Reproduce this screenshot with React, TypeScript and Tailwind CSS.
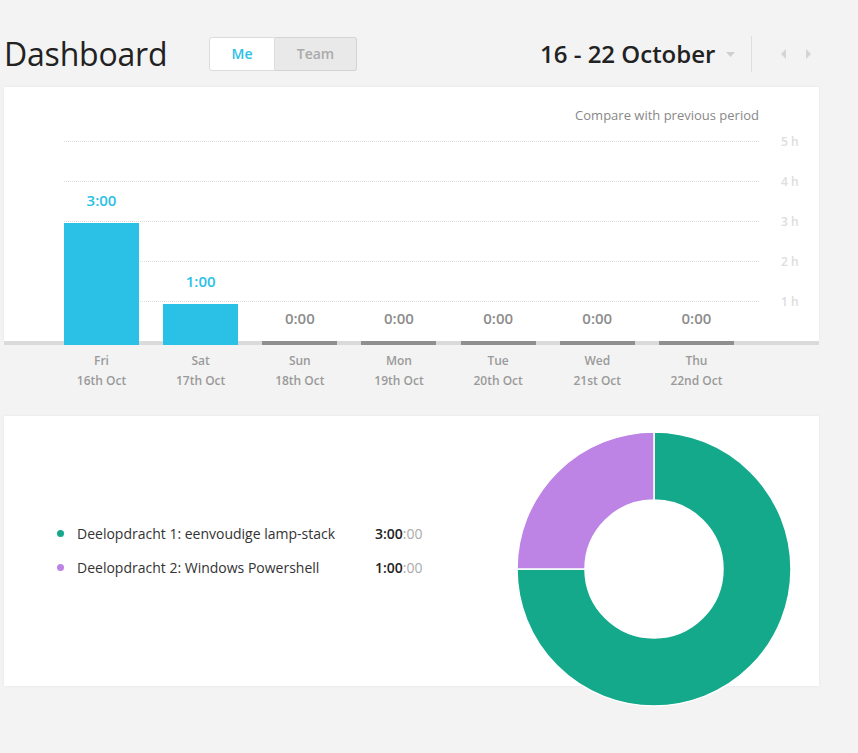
import React from "react";

const days = [
  { d: "Fri", date: "16th Oct", v: "3:00", h: 118, active: true },
  { d: "Sat", date: "17th Oct", v: "1:00", h: 37, active: true },
  { d: "Sun", date: "18th Oct", v: "0:00", h: 0, active: false },
  { d: "Mon", date: "19th Oct", v: "0:00", h: 0, active: false },
  { d: "Tue", date: "20th Oct", v: "0:00", h: 0, active: false },
  { d: "Wed", date: "21st Oct", v: "0:00", h: 0, active: false },
  { d: "Thu", date: "22nd Oct", v: "0:00", h: 0, active: false },
];

const gridTops = ["top-0", "top-[40px]", "top-[80px]", "top-[120px]", "top-[160px]"];
const gridLabels = ["5 h", "4 h", "3 h", "2 h", "1 h"];

export default function App() {
  return (
    <div className="w-[858px] min-h-[753px] bg-[#f3f3f3] font-['Open_Sans',sans-serif] text-[#333]">
      {/* Header */}
      <div className="flex h-[87px] items-center pl-[4px] pt-[20px]">
        <h1 className="w-[164px] whitespace-nowrap text-[32px] font-normal leading-none text-[#222] tracking-[-0.2px]">Dashboard</h1>
        <div className="ml-[41px] flex h-[34px]">
          <button className="w-[66px] rounded-l-[3px] border border-[#dcdcdc] bg-white text-[14px] font-semibold text-[#2bc1e6]">
            Me
          </button>
          <button className="w-[82px] rounded-r-[3px] border border-l-0 border-[#d4d4d4] bg-[#e9e9e9] text-[14px] font-semibold text-[#aaa]">
            Team
          </button>
        </div>
        <div className="ml-[183px] flex items-center">
          <span className="text-[24px] font-semibold leading-none text-[#222]">16 - 22 October</span>
          <svg width="9" height="5" viewBox="0 0 9 5" className="ml-[11px] mt-[2px]">
            <path d="M0 0 L9 0 L4.5 5 Z" fill="#cfcfcf" />
          </svg>
          <div className="ml-[16px] h-[36px] w-px bg-[#dedede]" />
          <svg width="5" height="10" viewBox="0 0 5 10" className="ml-[29px]">
            <path d="M5 0 L5 10 L0 5 Z" fill="#d4d4d4" />
          </svg>
          <svg width="5" height="10" viewBox="0 0 5 10" className="ml-[20px]">
            <path d="M0 0 L0 10 L5 5 Z" fill="#d4d4d4" />
          </svg>
        </div>
      </div>

      {/* Chart card */}
      <div className="mx-[4px] w-[815px]">
        <div className="flex h-[254px] flex-col bg-white shadow-[0_0_3px_rgba(0,0,0,0.06)]">
          <div className="flex h-[54px] justify-end pr-[60px] pt-[19px]">
            <span className="text-[13px] leading-[18px] text-[#888]">Compare with previous period</span>
          </div>
          <div className="relative ml-[60px] h-[200px] w-[695px]">
            {gridTops.map((t, i) => (
              <div key={i} className={`absolute left-0 ${t} w-[695px] border-t border-dotted border-[#dcdcdc]`}>
                <span className="absolute left-[717px] top-[-10px] whitespace-nowrap text-[12px] font-semibold leading-[20px] text-[#ddd]">
                  {gridLabels[i]}
                </span>
              </div>
            ))}
            <div className="relative flex h-full w-[670px] items-end justify-between">
              {days.map((d, i) => (
                <div key={i} className="flex w-[75px] flex-col items-center">
                  <span
                    className={`mb-[13px] text-[15px] leading-[20px] ${
                      d.active ? "font-semibold text-[#2bc1e6]" : "font-semibold text-[#8c8c8c]"
                    }`}
                  >
                    {d.v}
                  </span>
                  {d.h > 0 && <div className="w-[75px] bg-[#2bc1e6]" style={{ height: d.h }} />}
                </div>
              ))}
            </div>
          </div>
        </div>
        <div className="flex h-[4px] bg-[#dadada] pl-[60px]">
          <div className="flex w-[670px] justify-between">
            {days.map((d, i) => (
              <div key={i} className={`h-[4px] w-[75px] ${d.active ? "bg-[#2bc1e6]" : "bg-[#8f8f8f]"}`} />
            ))}
          </div>
        </div>
        <div className="flex pl-[60px] pt-[6px]">
          <div className="flex w-[670px] justify-between">
            {days.map((d, i) => (
              <div key={i} className="flex w-[75px] flex-col items-center text-[12px] font-semibold leading-[20px] text-[#9a9a9a]">
                <span>{d.d}</span>
                <span>{d.date}</span>
              </div>
            ))}
          </div>
        </div>
      </div>

      {/* Pie card */}
      <div className="mx-[4px] mt-[25px] flex h-[270px] w-[815px] items-center bg-white shadow-[0_0_3px_rgba(0,0,0,0.06)]">
        <div className="flex flex-col pl-[53px] pb-[2px]">
          <div className="flex h-[34px] items-center text-[14px]">
            <span className="h-[7px] w-[7px] rounded-full bg-[#15a98b]" />
            <span className="ml-[13px] w-[298px] text-[#333]">Deelopdracht 1: eenvoudige lamp-stack</span>
            <span className="font-semibold text-[#222]">3:00</span>
            <span className="text-[#aaa]">:00</span>
          </div>
          <div className="flex h-[34px] items-center text-[14px]">
            <span className="h-[7px] w-[7px] rounded-full bg-[#bd84e6]" />
            <span className="ml-[13px] w-[298px] text-[#333]">Deelopdracht 2: Windows Powershell</span>
            <span className="font-semibold text-[#222]">1:00</span>
            <span className="text-[#aaa]">:00</span>
          </div>
        </div>
        <svg
          width="274"
          height="274"
          viewBox="0 0 274 274"
          className="ml-auto mr-[28px] mt-[16px] self-start overflow-visible"
        >
          <path d="M137 0 A137 137 0 1 1 0 137 L68 137 A69 69 0 1 0 137 68 Z" fill="#15a98b" stroke="#fff" strokeWidth="1.5" />
          <path d="M0 137 A137 137 0 0 1 137 0 L137 68 A69 69 0 0 0 68 137 Z" fill="#bd84e6" stroke="#fff" strokeWidth="1.5" />
        </svg>
      </div>
    </div>
  );
}
